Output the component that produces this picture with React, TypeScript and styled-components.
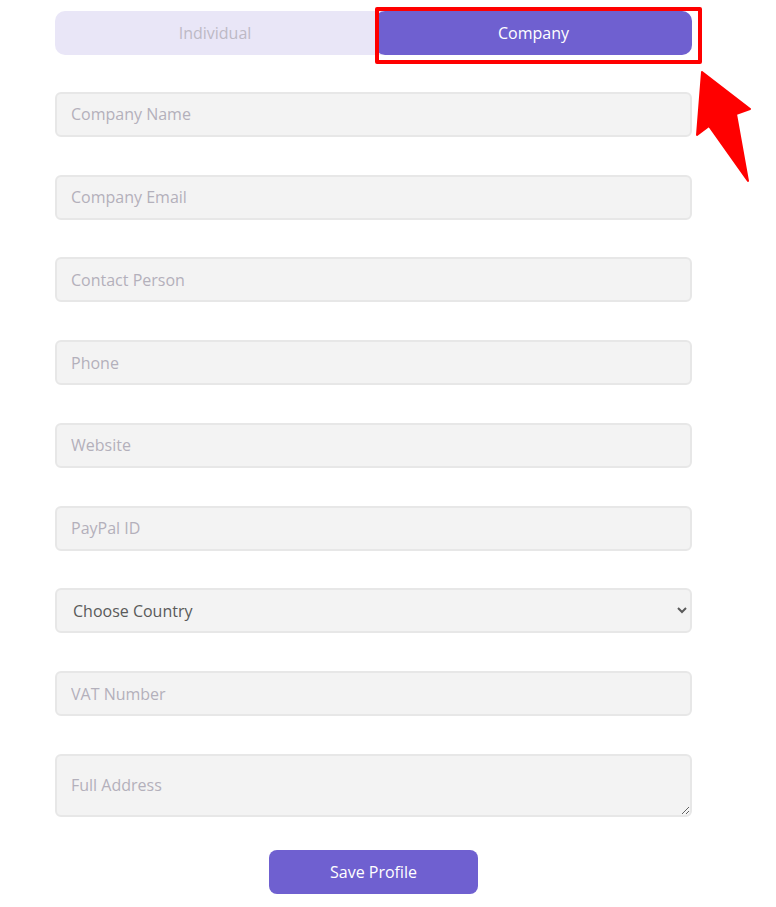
import React, { useState } from 'react'
import styled, { createGlobalStyle } from 'styled-components'

const GlobalStyle = createGlobalStyle`
	body {
		margin: 0;
		background: #ffffff;
		font-family: 'Open Sans', 'Noto Sans', sans-serif;
	}
`

const fields = ['Company Name', 'Company Email', 'Contact Person', 'Phone', 'Website', 'PayPal ID']

export default function App() {
	const [type, setType] = useState<'individual' | 'company'>('company')

	return (
		<Page>
			<GlobalStyle />
			<Form onSubmit={(e) => e.preventDefault()}>
				<Toggle>
					<Tab active={type === 'individual'} type='button' onClick={() => setType('individual')}>{'Individual'}</Tab>
					<Tab active={type === 'company'} type='button' onClick={() => setType('company')}>{'Company'}</Tab>
					<Highlight />
					<Arrow width='60' height='120' viewBox='0 0 60 120'>
						<polygon points='6,3 54,40 40,45 52,112 13,57 1,66' fill='#ff0000' strokeLinejoin='round' stroke='#ff0000' strokeWidth='2' />
					</Arrow>
				</Toggle>
				{fields.map((f) => (
					<Input key={f} placeholder={f} />
				))}
				<Select defaultValue=''>
					<option value=''>{'Choose Country'}</option>
				</Select>
				<Input placeholder='VAT Number' />
				<TextArea placeholder='Full Address' />
				<SaveButton type='submit'>{'Save Profile'}</SaveButton>
			</Form>
		</Page>
	)
}

const Page = styled.div`
	padding: 11px 0 0 55px;
	width: 637px;
`

const Form = styled.form`
	display: flex;
	flex-direction: column;
	gap: 37.75px;
`

const Toggle = styled.div`
	position: relative;
	display: grid;
	grid-template-columns: 320px 1fr;
	background: #e9e6f7;
	border-radius: 10px;
	height: 44px;
	margin-bottom: -0.8px;
`

interface TabProps {
	active?: boolean
}
const Tab = styled.button<TabProps>`
	border: none;
	border-radius: 10px;
	background: ${props => props.active ? '#6f60d0' : 'transparent'};
	color: ${props => props.active ? '#ffffff' : '#bdb9c5'};
	font-family: 'Open Sans', sans-serif;
	font-size: 16px;
	cursor: pointer;
`

const Highlight = styled.div`
	position: absolute;
	left: 320px;
	top: -4px;
	width: 327px;
	height: 57px;
	box-sizing: border-box;
	border: 4px solid #ff0000;
	border-radius: 2px;
	pointer-events: none;
`

const Arrow = styled.svg`
	position: absolute;
	left: 641px;
	top: 58px;
	pointer-events: none;
`

const fieldBase = `
	box-sizing: border-box;
	width: 100%;
	background: #f3f3f3;
	border: 2px solid #e7e7e7;
	border-radius: 6px;
	font-family: 'Open Sans', sans-serif;
	font-size: 16px;
	color: #555555;
	outline: none;
	&::placeholder {
		color: #b3b0bb;
	}
`

const Input = styled.input`
	${fieldBase}
	height: 45px;
	padding: 0 14px;
`

const Select = styled.select`
	${fieldBase}
	height: 45px;
	padding: 0 10px 0 12px;
	color: #5a5a5a;
`

const TextArea = styled.textarea`
	${fieldBase}
	height: 63px;
	padding: 18px 14px 0;
	resize: vertical;
	margin-bottom: -5px;
`

const SaveButton = styled.button`
	align-self: center;
	width: 209px;
	height: 44px;
	border: none;
	border-radius: 8px;
	background: #6f60d0;
	color: #ffffff;
	font-family: 'Open Sans', sans-serif;
	font-size: 16px;
	cursor: pointer;
`
